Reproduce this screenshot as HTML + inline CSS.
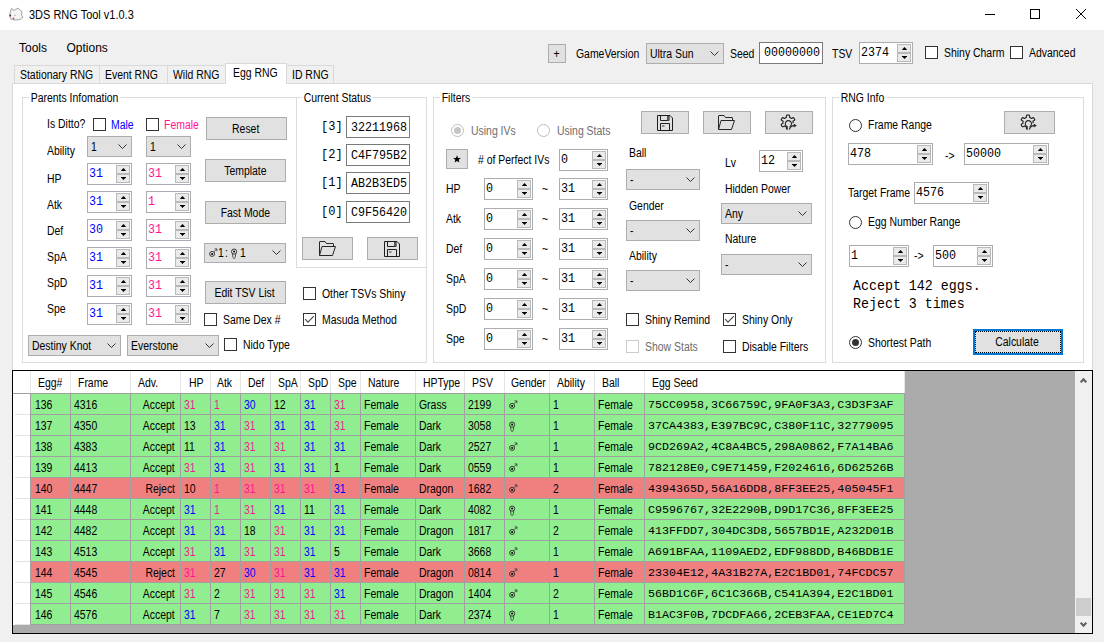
<!DOCTYPE html><html><head><meta charset="utf-8"><style>
html,body{margin:0;padding:0;width:1104px;height:642px;overflow:hidden;background:#f0f0f0;position:relative;font-family:"Liberation Sans",sans-serif}
div{box-sizing:border-box}
svg{display:block}
.t{position:absolute;white-space:nowrap;font:12px/20px "Liberation Sans",sans-serif;color:#000;transform-origin:0 50%;transform:scaleX(0.87)}
.m{position:absolute;white-space:nowrap;font:12px/20px "Liberation Mono",monospace;color:#000;transform:scaleY(1.14)}
.gt{background:#fff}
.btn,.cmb,.nud,.chk,.grp,.tb{position:absolute}
.btn{background:#e1e1e1;border:1px solid #adadad;display:flex;align-items:center;justify-content:center;padding-right:1px}
.bt{display:inline-block;white-space:nowrap;font:12px/20px "Liberation Sans",sans-serif;transform:scaleX(0.87)}
.cmb{background:#e1e1e1;border:1px solid #adadad}
.ct{position:absolute;left:3px;top:0;bottom:0;display:flex;align-items:center;white-space:nowrap;font:12px/20px "Liberation Sans",sans-serif;transform-origin:0 50%;transform:scaleX(0.87)}
.chev{position:absolute;right:4px;top:50%;margin-top:-2.6px}
.nud{background:#fff;border:1px solid #abadb3}
.nt{position:absolute;left:1px;top:0;bottom:0;display:flex;align-items:center;white-space:nowrap;font:11.7px/20px "Liberation Mono",monospace;transform:scaleY(1.14)}
.sp{position:absolute;right:1px;top:1px;bottom:1px;width:14px;border:1px solid #b9b9b9;background:#b9b9b9}
.su,.sd{position:absolute;left:0;right:0;background:#eaeaea;display:flex;align-items:center;justify-content:center}
.su{top:0;height:calc(50% - 1px)}
.sd{bottom:0;height:calc(50% - 1px)}
.chk{background:#fff;border:1px solid #333}
.chk.dis{border-color:#ccc}
.grp{border:1px solid #dcdcdc}
.tb{background:#fff;border:1px solid #7a7a7a}
.tab{position:absolute;background:#f0f0f0;border:1px solid #d9d9d9;border-bottom:none}
</style></head><body>
<div style="position:absolute;left:0;top:0;width:1104px;height:30px;background:#fff"></div>
<svg style="position:absolute;left:8px;top:7px" width="16" height="14" viewBox="0 0 16 14"><path d="M2 6 L3.5 1.5 L6 3.5 L10 1 L12 3 L14 4.5 L13.5 8 L15 10 L12 12.5 L7 13 L3 12 L1.5 9 Z" fill="#f4f4f4" stroke="#9a9a9a" stroke-width="0.9"/><circle cx="2.3" cy="8.5" r="0.9" fill="#333"/><circle cx="5.5" cy="11.5" r="0.9" fill="#d05050"/><path d="M6 8 L8 8.5" stroke="#aaa" stroke-width="0.8"/></svg>
<div class="t" style="left:29px;top:4.5px;transform:scaleX(0.915)">3DS RNG Tool v1.0.3</div>
<div style="position:absolute;left:985px;top:14px;width:10px;height:1px;background:#000"></div>
<div style="position:absolute;left:1030px;top:9px;width:10px;height:10px;border:1px solid #000"></div>
<svg style="position:absolute;left:1075px;top:8px" width="12" height="12" viewBox="0 0 12 12"><path d="M1 1 L11 11 M11 1 L1 11" stroke="#000" stroke-width="1"/></svg>
<div class="t" style="left:19px;top:37.5px;transform:none">Tools</div>
<div class="t" style="left:66.5px;top:37.5px;transform:none">Options</div>
<div class="btn" style="left:548px;top:44px;width:18px;height:19px;"><span class="bt">+</span></div>
<div class="t" style="left:575.5px;top:44px;">GameVersion</div>
<div class="cmb" style="left:646px;top:43px;width:78px;height:21px;"><span class="ct">Ultra Sun</span><svg class="chev" width="9" height="5" viewBox="0 0 9 5"><path d="M0.5 0.5 L4.5 4.5 L8.5 0.5" fill="none" stroke="#333" stroke-width="1"/></svg></div>
<div class="t" style="left:730px;top:43.5px;">Seed</div>
<div class="tb" style="left:759px;top:42px;width:64px;height:22px;"><span class="nt" style="left:4px">00000000</span></div>
<div class="t" style="left:832px;top:44px;">TSV</div>
<div class="nud" style="left:859px;top:42px;width:54px;height:22px;"><span class="nt" style="">2374</span><div class="sp"><div class="su"><svg width="5" height="3" viewBox="0 0 5 3"><path d="M-0.2 3 L2.5 0 L5.2 3Z" fill="#000"/></svg></div><div class="sd"><svg width="5" height="3" viewBox="0 0 5 3"><path d="M-0.2 0 L2.5 3 L5.2 0Z" fill="#000"/></svg></div></div></div>
<div class="chk" style="left:925px;top:46px;width:13px;height:13px;"></div>
<div class="t" style="left:944px;top:43px;">Shiny Charm</div>
<div class="chk" style="left:1010px;top:46px;width:13px;height:13px;"></div>
<div class="t" style="left:1029px;top:43px;">Advanced</div>
<div class="tab" style="left:14px;top:65px;width:86px;height:19px"></div>
<div class="t" style="left:20px;top:64.5px;">Stationary RNG</div>
<div class="tab" style="left:99px;top:65px;width:69px;height:19px"></div>
<div class="t" style="left:105px;top:64.5px;">Event RNG</div>
<div class="tab" style="left:167px;top:65px;width:59px;height:19px"></div>
<div class="t" style="left:173px;top:64.5px;">Wild RNG</div>
<div class="tab" style="left:286px;top:65px;width:48px;height:19px"></div>
<div class="t" style="left:292px;top:64.5px;">ID RNG</div>
<div style="position:absolute;left:12px;top:83px;width:1081px;height:300px;background:#fff;border:1px solid #d9d9d9"></div>
<div class="tab" style="left:225px;top:63px;width:62px;height:21px;background:#fff"></div>
<div class="t" style="left:233px;top:63px;">Egg RNG</div>
<div class="grp" style="left:22px;top:97px;width:405px;height:266px"></div>
<div class="t gt" style="left:29px;top:88px;padding:0 2px">Parents Infomation</div>
<div class="grp" style="left:296px;top:97px;width:131px;height:171px"></div>
<div class="t gt" style="left:302px;top:88px;padding:0 2px">Current Status</div>
<div class="grp" style="left:433px;top:97px;width:393px;height:266px"></div>
<div class="t gt" style="left:440px;top:88px;padding:0 2px">Filters</div>
<div class="grp" style="left:832px;top:97px;width:252px;height:266px"></div>
<div class="t gt" style="left:839px;top:88px;padding:0 2px">RNG Info</div>
<div class="t" style="left:46.5px;top:113.6px;">Is Ditto?</div>
<div class="chk" style="left:93px;top:118px;width:13px;height:13px;"></div>
<div class="t" style="left:111.2px;top:115px;color:#0000ff;">Male</div>
<div class="chk" style="left:146px;top:118px;width:13px;height:13px;"></div>
<div class="t" style="left:164.3px;top:115px;color:#ff1493;">Female</div>
<div class="btn" style="left:206px;top:117px;width:81px;height:23px;"><span class="bt">Reset</span></div>
<div class="t" style="left:46.5px;top:141px;">Ability</div>
<div class="cmb" style="left:87px;top:136px;width:45px;height:21px;"><span class="ct">1</span><svg class="chev" width="9" height="5" viewBox="0 0 9 5"><path d="M0.5 0.5 L4.5 4.5 L8.5 0.5" fill="none" stroke="#333" stroke-width="1"/></svg></div>
<div class="cmb" style="left:146px;top:136px;width:45px;height:21px;"><span class="ct">1</span><svg class="chev" width="9" height="5" viewBox="0 0 9 5"><path d="M0.5 0.5 L4.5 4.5 L8.5 0.5" fill="none" stroke="#333" stroke-width="1"/></svg></div>
<div class="btn" style="left:205px;top:159px;width:81px;height:23px;"><span class="bt">Template</span></div>
<div class="btn" style="left:205px;top:201px;width:81px;height:23px;"><span class="bt">Fast Mode</span></div>
<div class="t" style="left:46.5px;top:168.6px;">HP</div>
<div class="nud" style="left:87px;top:163px;width:45px;height:22px;"><span class="nt" style="color:#0000ff;">31</span><div class="sp"><div class="su"><svg width="5" height="3" viewBox="0 0 5 3"><path d="M-0.2 3 L2.5 0 L5.2 3Z" fill="#000"/></svg></div><div class="sd"><svg width="5" height="3" viewBox="0 0 5 3"><path d="M-0.2 0 L2.5 3 L5.2 0Z" fill="#000"/></svg></div></div></div>
<div class="nud" style="left:146px;top:163px;width:45px;height:22px;"><span class="nt" style="color:#ff1493;">31</span><div class="sp"><div class="su"><svg width="5" height="3" viewBox="0 0 5 3"><path d="M-0.2 3 L2.5 0 L5.2 3Z" fill="#000"/></svg></div><div class="sd"><svg width="5" height="3" viewBox="0 0 5 3"><path d="M-0.2 0 L2.5 3 L5.2 0Z" fill="#000"/></svg></div></div></div>
<div class="t" style="left:46.5px;top:194.6px;">Atk</div>
<div class="nud" style="left:87px;top:191px;width:45px;height:22px;"><span class="nt" style="color:#0000ff;">31</span><div class="sp"><div class="su"><svg width="5" height="3" viewBox="0 0 5 3"><path d="M-0.2 3 L2.5 0 L5.2 3Z" fill="#000"/></svg></div><div class="sd"><svg width="5" height="3" viewBox="0 0 5 3"><path d="M-0.2 0 L2.5 3 L5.2 0Z" fill="#000"/></svg></div></div></div>
<div class="nud" style="left:146px;top:191px;width:45px;height:22px;"><span class="nt" style="color:#ff1493;">1</span><div class="sp"><div class="su"><svg width="5" height="3" viewBox="0 0 5 3"><path d="M-0.2 3 L2.5 0 L5.2 3Z" fill="#000"/></svg></div><div class="sd"><svg width="5" height="3" viewBox="0 0 5 3"><path d="M-0.2 0 L2.5 3 L5.2 0Z" fill="#000"/></svg></div></div></div>
<div class="t" style="left:46.5px;top:220.6px;">Def</div>
<div class="nud" style="left:87px;top:219px;width:45px;height:22px;"><span class="nt" style="color:#0000ff;">30</span><div class="sp"><div class="su"><svg width="5" height="3" viewBox="0 0 5 3"><path d="M-0.2 3 L2.5 0 L5.2 3Z" fill="#000"/></svg></div><div class="sd"><svg width="5" height="3" viewBox="0 0 5 3"><path d="M-0.2 0 L2.5 3 L5.2 0Z" fill="#000"/></svg></div></div></div>
<div class="nud" style="left:146px;top:219px;width:45px;height:22px;"><span class="nt" style="color:#ff1493;">31</span><div class="sp"><div class="su"><svg width="5" height="3" viewBox="0 0 5 3"><path d="M-0.2 3 L2.5 0 L5.2 3Z" fill="#000"/></svg></div><div class="sd"><svg width="5" height="3" viewBox="0 0 5 3"><path d="M-0.2 0 L2.5 3 L5.2 0Z" fill="#000"/></svg></div></div></div>
<div class="t" style="left:46.5px;top:246.60000000000002px;">SpA</div>
<div class="nud" style="left:87px;top:247px;width:45px;height:22px;"><span class="nt" style="color:#0000ff;">31</span><div class="sp"><div class="su"><svg width="5" height="3" viewBox="0 0 5 3"><path d="M-0.2 3 L2.5 0 L5.2 3Z" fill="#000"/></svg></div><div class="sd"><svg width="5" height="3" viewBox="0 0 5 3"><path d="M-0.2 0 L2.5 3 L5.2 0Z" fill="#000"/></svg></div></div></div>
<div class="nud" style="left:146px;top:247px;width:45px;height:22px;"><span class="nt" style="color:#ff1493;">31</span><div class="sp"><div class="su"><svg width="5" height="3" viewBox="0 0 5 3"><path d="M-0.2 3 L2.5 0 L5.2 3Z" fill="#000"/></svg></div><div class="sd"><svg width="5" height="3" viewBox="0 0 5 3"><path d="M-0.2 0 L2.5 3 L5.2 0Z" fill="#000"/></svg></div></div></div>
<div class="t" style="left:46.5px;top:272.6px;">SpD</div>
<div class="nud" style="left:87px;top:275px;width:45px;height:22px;"><span class="nt" style="color:#0000ff;">31</span><div class="sp"><div class="su"><svg width="5" height="3" viewBox="0 0 5 3"><path d="M-0.2 3 L2.5 0 L5.2 3Z" fill="#000"/></svg></div><div class="sd"><svg width="5" height="3" viewBox="0 0 5 3"><path d="M-0.2 0 L2.5 3 L5.2 0Z" fill="#000"/></svg></div></div></div>
<div class="nud" style="left:146px;top:275px;width:45px;height:22px;"><span class="nt" style="color:#ff1493;">31</span><div class="sp"><div class="su"><svg width="5" height="3" viewBox="0 0 5 3"><path d="M-0.2 3 L2.5 0 L5.2 3Z" fill="#000"/></svg></div><div class="sd"><svg width="5" height="3" viewBox="0 0 5 3"><path d="M-0.2 0 L2.5 3 L5.2 0Z" fill="#000"/></svg></div></div></div>
<div class="t" style="left:46.5px;top:298.6px;">Spe</div>
<div class="nud" style="left:87px;top:303px;width:45px;height:22px;"><span class="nt" style="color:#0000ff;">31</span><div class="sp"><div class="su"><svg width="5" height="3" viewBox="0 0 5 3"><path d="M-0.2 3 L2.5 0 L5.2 3Z" fill="#000"/></svg></div><div class="sd"><svg width="5" height="3" viewBox="0 0 5 3"><path d="M-0.2 0 L2.5 3 L5.2 0Z" fill="#000"/></svg></div></div></div>
<div class="nud" style="left:146px;top:303px;width:45px;height:22px;"><span class="nt" style="color:#ff1493;">31</span><div class="sp"><div class="su"><svg width="5" height="3" viewBox="0 0 5 3"><path d="M-0.2 3 L2.5 0 L5.2 3Z" fill="#000"/></svg></div><div class="sd"><svg width="5" height="3" viewBox="0 0 5 3"><path d="M-0.2 0 L2.5 3 L5.2 0Z" fill="#000"/></svg></div></div></div>
<div class="cmb" style="left:204px;top:243px;width:82px;height:20px;"><span class="ct"></span><svg class="chev" width="9" height="5" viewBox="0 0 9 5"><path d="M0.5 0.5 L4.5 4.5 L8.5 0.5" fill="none" stroke="#333" stroke-width="1"/></svg></div>
<div style="position:absolute;left:208px;top:247px;width:12px;height:12px"><svg width="12" height="12" viewBox="0 0 12 12"><circle cx="4.1" cy="6.9" r="2.5" fill="none" stroke="#262626" stroke-width="0.9"/><circle cx="4.1" cy="6.9" r="1" fill="#000"/><path d="M5.9 4.9 L8.6 2.2 M6.6 1.9 H8.9 V4.2" fill="none" stroke="#3a3a3a" stroke-width="0.85"/></svg></div>
<div style="position:absolute;left:230px;top:247.6px;width:12px;height:12px"><svg width="12" height="12" viewBox="0 0 12 12"><circle cx="4.1" cy="3.6" r="2.6" fill="none" stroke="#262626" stroke-width="0.9"/><circle cx="4.1" cy="3.6" r="1" fill="#000"/><path d="M2.4 5.6 Q2.9 10.8 4.1 10.8 Q5.4 10.8 5.8 5.6" fill="none" stroke="#3a3a3a" stroke-width="0.85"/></svg></div>
<div class="t" style="left:218px;top:242.5px;">1</div>
<div class="t" style="left:224.5px;top:242.5px;">:</div>
<div class="t" style="left:239.5px;top:242.5px;">1</div>
<div class="btn" style="left:205px;top:281px;width:81px;height:23px;"><span class="bt">Edit TSV List</span></div>
<div class="chk" style="left:204px;top:313px;width:13px;height:13px;"></div>
<div class="t" style="left:223px;top:309.5px;">Same Dex #</div>
<div class="cmb" style="left:28px;top:335px;width:93px;height:21px;"><span class="ct">Destiny Knot</span><svg class="chev" width="9" height="5" viewBox="0 0 9 5"><path d="M0.5 0.5 L4.5 4.5 L8.5 0.5" fill="none" stroke="#333" stroke-width="1"/></svg></div>
<div class="cmb" style="left:127px;top:335px;width:92px;height:21px;"><span class="ct">Everstone</span><svg class="chev" width="9" height="5" viewBox="0 0 9 5"><path d="M0.5 0.5 L4.5 4.5 L8.5 0.5" fill="none" stroke="#333" stroke-width="1"/></svg></div>
<div class="chk" style="left:224px;top:338px;width:13px;height:13px;"></div>
<div class="t" style="left:243px;top:334.5px;">Nido Type</div>
<div class="m" style="left:321px;top:117px;transform:none">[3]</div>
<div class="tb" style="left:346px;top:116px;width:64px;height:22px;border-color:#7a7a7a"><span class="nt" style="left:4px;top:1px;bottom:-1px">32211968</span></div>
<div class="m" style="left:321px;top:145px;transform:none">[2]</div>
<div class="tb" style="left:346px;top:144px;width:64px;height:22px;border-color:#7a7a7a"><span class="nt" style="left:4px;top:1px;bottom:-1px">C4F795B2</span></div>
<div class="m" style="left:321px;top:173px;transform:none">[1]</div>
<div class="tb" style="left:346px;top:172px;width:64px;height:22px;border-color:#7a7a7a"><span class="nt" style="left:4px;top:1px;bottom:-1px">AB2B3ED5</span></div>
<div class="m" style="left:321px;top:202px;transform:none">[0]</div>
<div class="tb" style="left:346px;top:201px;width:64px;height:22px;border-color:#7a7a7a"><span class="nt" style="left:4px;top:1px;bottom:-1px">C9F56420</span></div>
<div class="btn" style="left:302px;top:237px;width:51px;height:23px;"><svg width="17" height="15" viewBox="0 0 17 15"><path d="M0.5 14.5 V1 Q0.5 0.5 1 0.5 H6 L7.5 2.5 H14 Q14.5 2.5 14.5 3 V5" fill="none" stroke="#262626" stroke-width="1"/><path d="M0.5 14.5 L3 5.5 H16.5 L13.5 14.5 Z" fill="none" stroke="#262626" stroke-width="1" stroke-linejoin="round"/></svg></div>
<div class="btn" style="left:367px;top:237px;width:51px;height:23px;"><svg width="16" height="16" viewBox="0 0 16 16"><path d="M0.5 0.5 H13 L15.5 3 V15.5 H0.5 Z" fill="none" stroke="#1e1e1e" stroke-width="1"/><path d="M3.5 0.5 V5.5 H12 V0.5" fill="none" stroke="#1e1e1e" stroke-width="1"/><rect x="10" y="1" width="2" height="4.5" fill="#555"/><path d="M3.5 15.5 V8.5 H12.5 V15.5" fill="none" stroke="#1e1e1e" stroke-width="1"/><rect x="5" y="10.5" width="2.5" height="1" fill="#333"/></svg></div>
<div class="chk" style="left:303px;top:287px;width:13px;height:13px;"></div>
<div class="t" style="left:321.5px;top:283.5px;">Other TSVs Shiny</div>
<div class="chk" style="left:303px;top:313px;width:13px;height:13px;"><svg width="11" height="11" viewBox="0 0 11 11" style="position:absolute;left:0;top:0"><path d="M1.2 5.2 L4 8.2 L9.8 2.2" fill="none" stroke="#4a4a4a" stroke-width="1.15"/></svg></div>
<div class="t" style="left:321.5px;top:309.5px;">Masuda Method</div>
<div style="position:absolute;left:451px;top:124px;width:13px;height:13px"><svg width="13" height="13" viewBox="0 0 13 13"><circle cx="6.5" cy="6.5" r="6" fill="#fff" stroke="#bcbcbc" stroke-width="1"/><circle cx="6.5" cy="6.5" r="3.5" fill="#c4c4c4"/></svg></div>
<div class="t" style="left:470.5px;top:120.5px;color:#6d6d6d;">Using IVs</div>
<div style="position:absolute;left:537px;top:124px;width:13px;height:13px"><svg width="13" height="13" viewBox="0 0 13 13"><circle cx="6.5" cy="6.5" r="6" fill="#fff" stroke="#bcbcbc" stroke-width="1"/></svg></div>
<div class="t" style="left:556.5px;top:120.5px;color:#6d6d6d;">Using Stats</div>
<div class="btn" style="left:446px;top:149px;width:22px;height:20px;"><div style="margin-top:-1px"><svg width="8" height="8" viewBox="0 0 8 8"><path d="M4.00 0.20 L5.03 2.88 L7.90 3.03 L5.66 4.84 L6.41 7.62 L4.00 6.05 L1.59 7.62 L2.34 4.84 L0.10 3.03 L2.97 2.88Z" fill="#000"/></svg></div></div>
<div class="t" style="left:477.5px;top:149.5px;"># of Perfect IVs</div>
<div class="nud" style="left:559px;top:149px;width:49px;height:22px;"><span class="nt" style="">0</span><div class="sp"><div class="su"><svg width="5" height="3" viewBox="0 0 5 3"><path d="M-0.2 3 L2.5 0 L5.2 3Z" fill="#000"/></svg></div><div class="sd"><svg width="5" height="3" viewBox="0 0 5 3"><path d="M-0.2 0 L2.5 3 L5.2 0Z" fill="#000"/></svg></div></div></div>
<div class="t" style="left:446px;top:179px;">HP</div>
<div class="nud" style="left:484px;top:178px;width:49px;height:22px;"><span class="nt" style="">0</span><div class="sp"><div class="su"><svg width="5" height="3" viewBox="0 0 5 3"><path d="M-0.2 3 L2.5 0 L5.2 3Z" fill="#000"/></svg></div><div class="sd"><svg width="5" height="3" viewBox="0 0 5 3"><path d="M-0.2 0 L2.5 3 L5.2 0Z" fill="#000"/></svg></div></div></div>
<div class="t" style="left:541.5px;top:178.5px;">~</div>
<div class="nud" style="left:559px;top:178px;width:49px;height:22px;"><span class="nt" style="">31</span><div class="sp"><div class="su"><svg width="5" height="3" viewBox="0 0 5 3"><path d="M-0.2 3 L2.5 0 L5.2 3Z" fill="#000"/></svg></div><div class="sd"><svg width="5" height="3" viewBox="0 0 5 3"><path d="M-0.2 0 L2.5 3 L5.2 0Z" fill="#000"/></svg></div></div></div>
<div class="t" style="left:446px;top:209px;">Atk</div>
<div class="nud" style="left:484px;top:208px;width:49px;height:22px;"><span class="nt" style="">0</span><div class="sp"><div class="su"><svg width="5" height="3" viewBox="0 0 5 3"><path d="M-0.2 3 L2.5 0 L5.2 3Z" fill="#000"/></svg></div><div class="sd"><svg width="5" height="3" viewBox="0 0 5 3"><path d="M-0.2 0 L2.5 3 L5.2 0Z" fill="#000"/></svg></div></div></div>
<div class="t" style="left:541.5px;top:208.5px;">~</div>
<div class="nud" style="left:559px;top:208px;width:49px;height:22px;"><span class="nt" style="">31</span><div class="sp"><div class="su"><svg width="5" height="3" viewBox="0 0 5 3"><path d="M-0.2 3 L2.5 0 L5.2 3Z" fill="#000"/></svg></div><div class="sd"><svg width="5" height="3" viewBox="0 0 5 3"><path d="M-0.2 0 L2.5 3 L5.2 0Z" fill="#000"/></svg></div></div></div>
<div class="t" style="left:446px;top:239px;">Def</div>
<div class="nud" style="left:484px;top:238px;width:49px;height:22px;"><span class="nt" style="">0</span><div class="sp"><div class="su"><svg width="5" height="3" viewBox="0 0 5 3"><path d="M-0.2 3 L2.5 0 L5.2 3Z" fill="#000"/></svg></div><div class="sd"><svg width="5" height="3" viewBox="0 0 5 3"><path d="M-0.2 0 L2.5 3 L5.2 0Z" fill="#000"/></svg></div></div></div>
<div class="t" style="left:541.5px;top:238.5px;">~</div>
<div class="nud" style="left:559px;top:238px;width:49px;height:22px;"><span class="nt" style="">31</span><div class="sp"><div class="su"><svg width="5" height="3" viewBox="0 0 5 3"><path d="M-0.2 3 L2.5 0 L5.2 3Z" fill="#000"/></svg></div><div class="sd"><svg width="5" height="3" viewBox="0 0 5 3"><path d="M-0.2 0 L2.5 3 L5.2 0Z" fill="#000"/></svg></div></div></div>
<div class="t" style="left:446px;top:269px;">SpA</div>
<div class="nud" style="left:484px;top:268px;width:49px;height:22px;"><span class="nt" style="">0</span><div class="sp"><div class="su"><svg width="5" height="3" viewBox="0 0 5 3"><path d="M-0.2 3 L2.5 0 L5.2 3Z" fill="#000"/></svg></div><div class="sd"><svg width="5" height="3" viewBox="0 0 5 3"><path d="M-0.2 0 L2.5 3 L5.2 0Z" fill="#000"/></svg></div></div></div>
<div class="t" style="left:541.5px;top:268.5px;">~</div>
<div class="nud" style="left:559px;top:268px;width:49px;height:22px;"><span class="nt" style="">31</span><div class="sp"><div class="su"><svg width="5" height="3" viewBox="0 0 5 3"><path d="M-0.2 3 L2.5 0 L5.2 3Z" fill="#000"/></svg></div><div class="sd"><svg width="5" height="3" viewBox="0 0 5 3"><path d="M-0.2 0 L2.5 3 L5.2 0Z" fill="#000"/></svg></div></div></div>
<div class="t" style="left:446px;top:299px;">SpD</div>
<div class="nud" style="left:484px;top:298px;width:49px;height:22px;"><span class="nt" style="">0</span><div class="sp"><div class="su"><svg width="5" height="3" viewBox="0 0 5 3"><path d="M-0.2 3 L2.5 0 L5.2 3Z" fill="#000"/></svg></div><div class="sd"><svg width="5" height="3" viewBox="0 0 5 3"><path d="M-0.2 0 L2.5 3 L5.2 0Z" fill="#000"/></svg></div></div></div>
<div class="t" style="left:541.5px;top:298.5px;">~</div>
<div class="nud" style="left:559px;top:298px;width:49px;height:22px;"><span class="nt" style="">31</span><div class="sp"><div class="su"><svg width="5" height="3" viewBox="0 0 5 3"><path d="M-0.2 3 L2.5 0 L5.2 3Z" fill="#000"/></svg></div><div class="sd"><svg width="5" height="3" viewBox="0 0 5 3"><path d="M-0.2 0 L2.5 3 L5.2 0Z" fill="#000"/></svg></div></div></div>
<div class="t" style="left:446px;top:329px;">Spe</div>
<div class="nud" style="left:484px;top:328px;width:49px;height:22px;"><span class="nt" style="">0</span><div class="sp"><div class="su"><svg width="5" height="3" viewBox="0 0 5 3"><path d="M-0.2 3 L2.5 0 L5.2 3Z" fill="#000"/></svg></div><div class="sd"><svg width="5" height="3" viewBox="0 0 5 3"><path d="M-0.2 0 L2.5 3 L5.2 0Z" fill="#000"/></svg></div></div></div>
<div class="t" style="left:541.5px;top:328.5px;">~</div>
<div class="nud" style="left:559px;top:328px;width:49px;height:22px;"><span class="nt" style="">31</span><div class="sp"><div class="su"><svg width="5" height="3" viewBox="0 0 5 3"><path d="M-0.2 3 L2.5 0 L5.2 3Z" fill="#000"/></svg></div><div class="sd"><svg width="5" height="3" viewBox="0 0 5 3"><path d="M-0.2 0 L2.5 3 L5.2 0Z" fill="#000"/></svg></div></div></div>
<div class="btn" style="left:641px;top:111px;width:48px;height:23px;"><svg width="16" height="16" viewBox="0 0 16 16"><path d="M0.5 0.5 H13 L15.5 3 V15.5 H0.5 Z" fill="none" stroke="#1e1e1e" stroke-width="1"/><path d="M3.5 0.5 V5.5 H12 V0.5" fill="none" stroke="#1e1e1e" stroke-width="1"/><rect x="10" y="1" width="2" height="4.5" fill="#555"/><path d="M3.5 15.5 V8.5 H12.5 V15.5" fill="none" stroke="#1e1e1e" stroke-width="1"/><rect x="5" y="10.5" width="2.5" height="1" fill="#333"/></svg></div>
<div class="btn" style="left:703px;top:111px;width:48px;height:23px;"><svg width="17" height="15" viewBox="0 0 17 15"><path d="M0.5 14.5 V1 Q0.5 0.5 1 0.5 H6 L7.5 2.5 H14 Q14.5 2.5 14.5 3 V5" fill="none" stroke="#262626" stroke-width="1"/><path d="M0.5 14.5 L3 5.5 H16.5 L13.5 14.5 Z" fill="none" stroke="#262626" stroke-width="1" stroke-linejoin="round"/></svg></div>
<div class="btn" style="left:765px;top:111px;width:48px;height:23px;"><svg width="18" height="17" viewBox="0 0 18 17"><path d="M6.7 15.3 L6.5 14.8 L6.4 14.1 L6.4 13.4 L6.3 12.9 L6.1 12.8 L5.9 12.7 L5.7 12.6 L5.5 12.5 L5.3 12.4 L5.1 12.3 L5.0 12.2 L4.8 12.0 L4.3 12.2 L3.7 12.5 L3.0 12.8 L2.5 12.8 L2.3 12.6 L2.1 12.3 L1.9 12.1 L1.8 11.8 L1.6 11.5 L1.5 11.2 L1.3 11.0 L1.2 10.7 L1.5 10.2 L2.1 9.8 L2.7 9.4 L3.1 9.1 L3.0 8.9 L3.0 8.6 L3.0 8.4 L3.0 8.2 L3.0 8.0 L3.0 7.8 L3.0 7.5 L3.1 7.3 L2.7 7.0 L2.1 6.6 L1.5 6.2 L1.2 5.7 L1.3 5.4 L1.5 5.2 L1.6 4.9 L1.8 4.6 L1.9 4.3 L2.1 4.1 L2.3 3.8 L2.5 3.6 L3.0 3.6 L3.7 3.9 L4.3 4.2 L4.8 4.4 L5.0 4.2 L5.1 4.1 L5.3 4.0 L5.5 3.9 L5.7 3.8 L5.9 3.7 L6.1 3.6 L6.3 3.5 L6.4 3.0 L6.4 2.3 L6.5 1.6 L6.7 1.1 L7.1 1.1 L7.4 1.0 L7.7 1.0 L8.0 1.0 L8.3 1.0 L8.6 1.0 L8.9 1.1 L9.3 1.1 L9.5 1.6 L9.6 2.3 L9.6 3.0 L9.7 3.5 L9.9 3.6 L10.1 3.7 L10.3 3.8 L10.5 3.9 L10.7 4.0 L10.9 4.1 L11.0 4.2 L11.2 4.4 L11.7 4.2 L12.3 3.9 L13.0 3.6 L13.5 3.6 L13.7 3.8 L13.9 4.1 L14.1 4.3 L14.2 4.6 L14.4 4.9 L14.5 5.2 L14.7 5.4 L14.8 5.7 L14.5 6.2 L13.9 6.6 L13.3 7.0 L12.9 7.3 L13.0 7.5 L13.0 7.8 L13.0 8.0 L13.0 8.2 L13.0 8.4 L13.0 8.6 L13.0 8.9 L12.9 9.1 L12.9 9.3" fill="none" stroke="#1a1a1a" stroke-width="1.1" stroke-linejoin="round"/><path d="M7.2 15.8 V12.6 A3.1 3.1 0 1 1 9.6 12.6" fill="none" stroke="#2a2a2a" stroke-width="1.1"/><path d="M9.4 15.6 Q10 11.6 14.4 11.6" fill="none" stroke="#2a2a2a" stroke-width="1.1"/><path d="M13.8 9.8 L16.8 11.6 L13.8 13.4 Z" fill="#222"/></svg></div>
<div class="t" style="left:628.5px;top:143px;">Ball</div>
<div class="cmb" style="left:626px;top:169px;width:74px;height:21px;"><span class="ct">-</span><svg class="chev" width="9" height="5" viewBox="0 0 9 5"><path d="M0.5 0.5 L4.5 4.5 L8.5 0.5" fill="none" stroke="#333" stroke-width="1"/></svg></div>
<div class="t" style="left:628.5px;top:195.5px;">Gender</div>
<div class="cmb" style="left:626px;top:220px;width:74px;height:21px;"><span class="ct">-</span><svg class="chev" width="9" height="5" viewBox="0 0 9 5"><path d="M0.5 0.5 L4.5 4.5 L8.5 0.5" fill="none" stroke="#333" stroke-width="1"/></svg></div>
<div class="t" style="left:628.5px;top:246px;">Ability</div>
<div class="cmb" style="left:626px;top:270px;width:74px;height:21px;"><span class="ct">-</span><svg class="chev" width="9" height="5" viewBox="0 0 9 5"><path d="M0.5 0.5 L4.5 4.5 L8.5 0.5" fill="none" stroke="#333" stroke-width="1"/></svg></div>
<div class="t" style="left:725px;top:153px;">Lv</div>
<div class="nud" style="left:759px;top:150px;width:44px;height:22px;"><span class="nt" style="">12</span><div class="sp"><div class="su"><svg width="5" height="3" viewBox="0 0 5 3"><path d="M-0.2 3 L2.5 0 L5.2 3Z" fill="#000"/></svg></div><div class="sd"><svg width="5" height="3" viewBox="0 0 5 3"><path d="M-0.2 0 L2.5 3 L5.2 0Z" fill="#000"/></svg></div></div></div>
<div class="t" style="left:724.5px;top:178.5px;">Hidden Power</div>
<div class="cmb" style="left:721px;top:203px;width:91px;height:21px;"><span class="ct">Any</span><svg class="chev" width="9" height="5" viewBox="0 0 9 5"><path d="M0.5 0.5 L4.5 4.5 L8.5 0.5" fill="none" stroke="#333" stroke-width="1"/></svg></div>
<div class="t" style="left:724.5px;top:228.5px;">Nature</div>
<div class="cmb" style="left:721px;top:254px;width:91px;height:21px;"><span class="ct">-</span><svg class="chev" width="9" height="5" viewBox="0 0 9 5"><path d="M0.5 0.5 L4.5 4.5 L8.5 0.5" fill="none" stroke="#333" stroke-width="1"/></svg></div>
<div class="chk" style="left:626px;top:313px;width:13px;height:13px;"></div>
<div class="t" style="left:644.5px;top:309.5px;">Shiny Remind</div>
<div class="chk" style="left:723px;top:313px;width:13px;height:13px;"><svg width="11" height="11" viewBox="0 0 11 11" style="position:absolute;left:0;top:0"><path d="M1.2 5.2 L4 8.2 L9.8 2.2" fill="none" stroke="#4a4a4a" stroke-width="1.15"/></svg></div>
<div class="t" style="left:741.5px;top:309.5px;">Shiny Only</div>
<div class="chk dis" style="left:626px;top:340px;width:13px;height:13px;"></div>
<div class="t" style="left:644.5px;top:336.5px;color:#6d6d6d;">Show Stats</div>
<div class="chk" style="left:723px;top:340px;width:13px;height:13px;"></div>
<div class="t" style="left:741.5px;top:336.5px;">Disable Filters</div>
<div style="position:absolute;left:849px;top:119px;width:13px;height:13px"><svg width="13" height="13" viewBox="0 0 13 13"><circle cx="6.5" cy="6.5" r="6" fill="#fff" stroke="#333" stroke-width="1"/></svg></div>
<div class="t" style="left:868px;top:115px;">Frame Range</div>
<div class="btn" style="left:1004px;top:111px;width:51px;height:23px;"><svg width="18" height="17" viewBox="0 0 18 17"><path d="M6.7 15.3 L6.5 14.8 L6.4 14.1 L6.4 13.4 L6.3 12.9 L6.1 12.8 L5.9 12.7 L5.7 12.6 L5.5 12.5 L5.3 12.4 L5.1 12.3 L5.0 12.2 L4.8 12.0 L4.3 12.2 L3.7 12.5 L3.0 12.8 L2.5 12.8 L2.3 12.6 L2.1 12.3 L1.9 12.1 L1.8 11.8 L1.6 11.5 L1.5 11.2 L1.3 11.0 L1.2 10.7 L1.5 10.2 L2.1 9.8 L2.7 9.4 L3.1 9.1 L3.0 8.9 L3.0 8.6 L3.0 8.4 L3.0 8.2 L3.0 8.0 L3.0 7.8 L3.0 7.5 L3.1 7.3 L2.7 7.0 L2.1 6.6 L1.5 6.2 L1.2 5.7 L1.3 5.4 L1.5 5.2 L1.6 4.9 L1.8 4.6 L1.9 4.3 L2.1 4.1 L2.3 3.8 L2.5 3.6 L3.0 3.6 L3.7 3.9 L4.3 4.2 L4.8 4.4 L5.0 4.2 L5.1 4.1 L5.3 4.0 L5.5 3.9 L5.7 3.8 L5.9 3.7 L6.1 3.6 L6.3 3.5 L6.4 3.0 L6.4 2.3 L6.5 1.6 L6.7 1.1 L7.1 1.1 L7.4 1.0 L7.7 1.0 L8.0 1.0 L8.3 1.0 L8.6 1.0 L8.9 1.1 L9.3 1.1 L9.5 1.6 L9.6 2.3 L9.6 3.0 L9.7 3.5 L9.9 3.6 L10.1 3.7 L10.3 3.8 L10.5 3.9 L10.7 4.0 L10.9 4.1 L11.0 4.2 L11.2 4.4 L11.7 4.2 L12.3 3.9 L13.0 3.6 L13.5 3.6 L13.7 3.8 L13.9 4.1 L14.1 4.3 L14.2 4.6 L14.4 4.9 L14.5 5.2 L14.7 5.4 L14.8 5.7 L14.5 6.2 L13.9 6.6 L13.3 7.0 L12.9 7.3 L13.0 7.5 L13.0 7.8 L13.0 8.0 L13.0 8.2 L13.0 8.4 L13.0 8.6 L13.0 8.9 L12.9 9.1 L12.9 9.3" fill="none" stroke="#1a1a1a" stroke-width="1.1" stroke-linejoin="round"/><path d="M7.2 15.8 V12.6 A3.1 3.1 0 1 1 9.6 12.6" fill="none" stroke="#2a2a2a" stroke-width="1.1"/><path d="M9.4 15.6 Q10 11.6 14.4 11.6" fill="none" stroke="#2a2a2a" stroke-width="1.1"/><path d="M13.8 9.8 L16.8 11.6 L13.8 13.4 Z" fill="#222"/></svg></div>
<div class="nud" style="left:848px;top:143px;width:85px;height:22px;"><span class="nt" style="">478</span><div class="sp"><div class="su"><svg width="5" height="3" viewBox="0 0 5 3"><path d="M-0.2 3 L2.5 0 L5.2 3Z" fill="#000"/></svg></div><div class="sd"><svg width="5" height="3" viewBox="0 0 5 3"><path d="M-0.2 0 L2.5 3 L5.2 0Z" fill="#000"/></svg></div></div></div>
<div class="t" style="left:944.5px;top:145.5px;">-></div>
<div class="nud" style="left:964px;top:143px;width:85px;height:22px;"><span class="nt" style="">50000</span><div class="sp"><div class="su"><svg width="5" height="3" viewBox="0 0 5 3"><path d="M-0.2 3 L2.5 0 L5.2 3Z" fill="#000"/></svg></div><div class="sd"><svg width="5" height="3" viewBox="0 0 5 3"><path d="M-0.2 0 L2.5 3 L5.2 0Z" fill="#000"/></svg></div></div></div>
<div class="t" style="left:847.5px;top:182.5px;">Target Frame</div>
<div class="nud" style="left:914px;top:182px;width:75px;height:22px;"><span class="nt" style="">4576</span><div class="sp"><div class="su"><svg width="5" height="3" viewBox="0 0 5 3"><path d="M-0.2 3 L2.5 0 L5.2 3Z" fill="#000"/></svg></div><div class="sd"><svg width="5" height="3" viewBox="0 0 5 3"><path d="M-0.2 0 L2.5 3 L5.2 0Z" fill="#000"/></svg></div></div></div>
<div style="position:absolute;left:849px;top:216px;width:13px;height:13px"><svg width="13" height="13" viewBox="0 0 13 13"><circle cx="6.5" cy="6.5" r="6" fill="#fff" stroke="#333" stroke-width="1"/></svg></div>
<div class="t" style="left:868px;top:212px;">Egg Number Range</div>
<div class="nud" style="left:849px;top:245px;width:60px;height:22px;"><span class="nt" style="">1</span><div class="sp"><div class="su"><svg width="5" height="3" viewBox="0 0 5 3"><path d="M-0.2 3 L2.5 0 L5.2 3Z" fill="#000"/></svg></div><div class="sd"><svg width="5" height="3" viewBox="0 0 5 3"><path d="M-0.2 0 L2.5 3 L5.2 0Z" fill="#000"/></svg></div></div></div>
<div class="t" style="left:914px;top:245.5px;">-></div>
<div class="nud" style="left:933px;top:245px;width:60px;height:22px;"><span class="nt" style="">500</span><div class="sp"><div class="su"><svg width="5" height="3" viewBox="0 0 5 3"><path d="M-0.2 3 L2.5 0 L5.2 3Z" fill="#000"/></svg></div><div class="sd"><svg width="5" height="3" viewBox="0 0 5 3"><path d="M-0.2 0 L2.5 3 L5.2 0Z" fill="#000"/></svg></div></div></div>
<div class="m" style="left:853px;top:276.8px;font-size:13.3px;">Accept 142 eggs.</div>
<div class="m" style="left:853px;top:294.8px;font-size:13.3px;">Reject 3 times</div>
<div style="position:absolute;left:849px;top:336px;width:13px;height:13px"><svg width="13" height="13" viewBox="0 0 13 13"><circle cx="6.5" cy="6.5" r="6" fill="#fff" stroke="#333" stroke-width="1"/><circle cx="6.5" cy="6.5" r="3.5" fill="#333"/></svg></div>
<div class="t" style="left:868px;top:332.5px;">Shortest Path</div>
<div style="position:absolute;left:973px;top:329px;width:90px;height:26px;border:2px solid #0078d7;background:#e1e1e1"><div style="position:absolute;left:0;top:0;right:0;bottom:0;border:1px dotted #000"></div><div class="bt" style="position:absolute;left:0;right:2px;top:1px;text-align:center">Calculate</div></div>
<div style="position:absolute;left:12px;top:370px;width:1081px;height:264px;background:#ababab;border:1px solid #000"></div>
<div style="position:absolute;left:13px;top:371px;width:892px;height:22px;background:#fff"></div>
<div style="position:absolute;left:13px;top:371px;width:17px;height:254px;background:#fff"></div>
<div style="position:absolute;left:70px;top:371px;width:1px;height:22px;background:#e5e5e5"></div>
<div style="position:absolute;left:130px;top:371px;width:1px;height:22px;background:#e5e5e5"></div>
<div style="position:absolute;left:180px;top:371px;width:1px;height:22px;background:#e5e5e5"></div>
<div style="position:absolute;left:210px;top:371px;width:1px;height:22px;background:#e5e5e5"></div>
<div style="position:absolute;left:240px;top:371px;width:1px;height:22px;background:#e5e5e5"></div>
<div style="position:absolute;left:270px;top:371px;width:1px;height:22px;background:#e5e5e5"></div>
<div style="position:absolute;left:300px;top:371px;width:1px;height:22px;background:#e5e5e5"></div>
<div style="position:absolute;left:330px;top:371px;width:1px;height:22px;background:#e5e5e5"></div>
<div style="position:absolute;left:360px;top:371px;width:1px;height:22px;background:#e5e5e5"></div>
<div style="position:absolute;left:415px;top:371px;width:1px;height:22px;background:#e5e5e5"></div>
<div style="position:absolute;left:464px;top:371px;width:1px;height:22px;background:#e5e5e5"></div>
<div style="position:absolute;left:504px;top:371px;width:1px;height:22px;background:#e5e5e5"></div>
<div style="position:absolute;left:549px;top:371px;width:1px;height:22px;background:#e5e5e5"></div>
<div style="position:absolute;left:594px;top:371px;width:1px;height:22px;background:#e5e5e5"></div>
<div style="position:absolute;left:644px;top:371px;width:1px;height:22px;background:#e5e5e5"></div>
<div style="position:absolute;left:904px;top:371px;width:1px;height:22px;background:#e5e5e5"></div>
<div style="position:absolute;left:30px;top:371px;width:1px;height:22px;background:#e5e5e5"></div>
<div style="position:absolute;left:31px;top:394px;width:873px;height:20px;background:#90ee90"></div>
<div style="position:absolute;left:31px;top:393px;width:873px;height:1px;background:#a0a0a0"></div>
<div style="position:absolute;left:15px;top:414px;width:15px;height:1px;background:#e3e3e3"></div>
<div class="t" style="left:34.5px;top:395px;">136</div>
<div class="t" style="left:74px;top:395px;">4316</div>
<div class="t" style="right:929px;top:395px;transform-origin:100% 50%">Accept</div>
<div class="t" style="left:184px;top:395px;color:#ff1493;">31</div>
<div class="t" style="left:214px;top:395px;color:#ff1493;">1</div>
<div class="t" style="left:244px;top:395px;color:#0000ff;">30</div>
<div class="t" style="left:274px;top:395px;color:#000;">12</div>
<div class="t" style="left:304px;top:395px;color:#0000ff;">31</div>
<div class="t" style="left:334px;top:395px;color:#ff1493;">31</div>
<div class="t" style="left:364px;top:395px;">Female</div>
<div class="t" style="left:419px;top:395px;">Grass</div>
<div class="t" style="left:468px;top:395px;">2199</div>
<div style="position:absolute;left:508px;top:399px;width:12px;height:12px"><svg width="12" height="12" viewBox="0 0 12 12"><circle cx="4.1" cy="6.9" r="2.5" fill="none" stroke="#262626" stroke-width="0.9"/><circle cx="4.1" cy="6.9" r="1" fill="#000"/><path d="M5.9 4.9 L8.6 2.2 M6.6 1.9 H8.9 V4.2" fill="none" stroke="#3a3a3a" stroke-width="0.85"/></svg></div>
<div class="t" style="left:553px;top:395px;">1</div>
<div class="t" style="left:598px;top:395px;">Female</div>
<div class="m" style="left:648px;top:395px;font-size:11.7px;transform:none">75CC0958,3C66759C,9FA0F3A3,C3D3F3AF</div>
<div style="position:absolute;left:31px;top:415px;width:873px;height:20px;background:#90ee90"></div>
<div style="position:absolute;left:31px;top:414px;width:873px;height:1px;background:#a0a0a0"></div>
<div style="position:absolute;left:15px;top:435px;width:15px;height:1px;background:#e3e3e3"></div>
<div class="t" style="left:34.5px;top:416px;">137</div>
<div class="t" style="left:74px;top:416px;">4350</div>
<div class="t" style="right:929px;top:416px;transform-origin:100% 50%">Accept</div>
<div class="t" style="left:184px;top:416px;color:#000;">13</div>
<div class="t" style="left:214px;top:416px;color:#0000ff;">31</div>
<div class="t" style="left:244px;top:416px;color:#ff1493;">31</div>
<div class="t" style="left:274px;top:416px;color:#0000ff;">31</div>
<div class="t" style="left:304px;top:416px;color:#0000ff;">31</div>
<div class="t" style="left:334px;top:416px;color:#ff1493;">31</div>
<div class="t" style="left:364px;top:416px;">Female</div>
<div class="t" style="left:419px;top:416px;">Dark</div>
<div class="t" style="left:468px;top:416px;">3058</div>
<div style="position:absolute;left:508px;top:420.5px;width:12px;height:12px"><svg width="12" height="12" viewBox="0 0 12 12"><circle cx="4.1" cy="3.6" r="2.6" fill="none" stroke="#262626" stroke-width="0.9"/><circle cx="4.1" cy="3.6" r="1" fill="#000"/><path d="M2.4 5.6 Q2.9 10.8 4.1 10.8 Q5.4 10.8 5.8 5.6" fill="none" stroke="#3a3a3a" stroke-width="0.85"/></svg></div>
<div class="t" style="left:553px;top:416px;">1</div>
<div class="t" style="left:598px;top:416px;">Female</div>
<div class="m" style="left:648px;top:416px;font-size:11.7px;transform:none">37CA4383,E397BC9C,C380F11C,32779095</div>
<div style="position:absolute;left:31px;top:436px;width:873px;height:20px;background:#90ee90"></div>
<div style="position:absolute;left:31px;top:435px;width:873px;height:1px;background:#a0a0a0"></div>
<div style="position:absolute;left:15px;top:456px;width:15px;height:1px;background:#e3e3e3"></div>
<div class="t" style="left:34.5px;top:437px;">138</div>
<div class="t" style="left:74px;top:437px;">4383</div>
<div class="t" style="right:929px;top:437px;transform-origin:100% 50%">Accept</div>
<div class="t" style="left:184px;top:437px;color:#000;">11</div>
<div class="t" style="left:214px;top:437px;color:#0000ff;">31</div>
<div class="t" style="left:244px;top:437px;color:#ff1493;">31</div>
<div class="t" style="left:274px;top:437px;color:#ff1493;">31</div>
<div class="t" style="left:304px;top:437px;color:#0000ff;">31</div>
<div class="t" style="left:334px;top:437px;color:#0000ff;">31</div>
<div class="t" style="left:364px;top:437px;">Female</div>
<div class="t" style="left:419px;top:437px;">Dark</div>
<div class="t" style="left:468px;top:437px;">2527</div>
<div style="position:absolute;left:508px;top:441px;width:12px;height:12px"><svg width="12" height="12" viewBox="0 0 12 12"><circle cx="4.1" cy="6.9" r="2.5" fill="none" stroke="#262626" stroke-width="0.9"/><circle cx="4.1" cy="6.9" r="1" fill="#000"/><path d="M5.9 4.9 L8.6 2.2 M6.6 1.9 H8.9 V4.2" fill="none" stroke="#3a3a3a" stroke-width="0.85"/></svg></div>
<div class="t" style="left:553px;top:437px;">1</div>
<div class="t" style="left:598px;top:437px;">Female</div>
<div class="m" style="left:648px;top:437px;font-size:11.7px;transform:none">9CD269A2,4C8A4BC5,298A0862,F7A14BA6</div>
<div style="position:absolute;left:31px;top:457px;width:873px;height:20px;background:#90ee90"></div>
<div style="position:absolute;left:31px;top:456px;width:873px;height:1px;background:#a0a0a0"></div>
<div style="position:absolute;left:15px;top:477px;width:15px;height:1px;background:#e3e3e3"></div>
<div class="t" style="left:34.5px;top:458px;">139</div>
<div class="t" style="left:74px;top:458px;">4413</div>
<div class="t" style="right:929px;top:458px;transform-origin:100% 50%">Accept</div>
<div class="t" style="left:184px;top:458px;color:#ff1493;">31</div>
<div class="t" style="left:214px;top:458px;color:#0000ff;">31</div>
<div class="t" style="left:244px;top:458px;color:#ff1493;">31</div>
<div class="t" style="left:274px;top:458px;color:#0000ff;">31</div>
<div class="t" style="left:304px;top:458px;color:#0000ff;">31</div>
<div class="t" style="left:334px;top:458px;color:#000;">1</div>
<div class="t" style="left:364px;top:458px;">Female</div>
<div class="t" style="left:419px;top:458px;">Dark</div>
<div class="t" style="left:468px;top:458px;">0559</div>
<div style="position:absolute;left:508px;top:462px;width:12px;height:12px"><svg width="12" height="12" viewBox="0 0 12 12"><circle cx="4.1" cy="6.9" r="2.5" fill="none" stroke="#262626" stroke-width="0.9"/><circle cx="4.1" cy="6.9" r="1" fill="#000"/><path d="M5.9 4.9 L8.6 2.2 M6.6 1.9 H8.9 V4.2" fill="none" stroke="#3a3a3a" stroke-width="0.85"/></svg></div>
<div class="t" style="left:553px;top:458px;">1</div>
<div class="t" style="left:598px;top:458px;">Female</div>
<div class="m" style="left:648px;top:458px;font-size:11.7px;transform:none">782128E0,C9E71459,F2024616,6D62526B</div>
<div style="position:absolute;left:31px;top:478px;width:873px;height:20px;background:#f08080"></div>
<div style="position:absolute;left:31px;top:477px;width:873px;height:1px;background:#a0a0a0"></div>
<div style="position:absolute;left:15px;top:498px;width:15px;height:1px;background:#e3e3e3"></div>
<div class="t" style="left:34.5px;top:479px;">140</div>
<div class="t" style="left:74px;top:479px;">4447</div>
<div class="t" style="right:929px;top:479px;transform-origin:100% 50%">Reject</div>
<div class="t" style="left:184px;top:479px;color:#000;">10</div>
<div class="t" style="left:214px;top:479px;color:#ff1493;">1</div>
<div class="t" style="left:244px;top:479px;color:#ff1493;">31</div>
<div class="t" style="left:274px;top:479px;color:#ff1493;">31</div>
<div class="t" style="left:304px;top:479px;color:#ff1493;">31</div>
<div class="t" style="left:334px;top:479px;color:#0000ff;">31</div>
<div class="t" style="left:364px;top:479px;">Female</div>
<div class="t" style="left:419px;top:479px;">Dragon</div>
<div class="t" style="left:468px;top:479px;">1682</div>
<div style="position:absolute;left:508px;top:483px;width:12px;height:12px"><svg width="12" height="12" viewBox="0 0 12 12"><circle cx="4.1" cy="6.9" r="2.5" fill="none" stroke="#262626" stroke-width="0.9"/><circle cx="4.1" cy="6.9" r="1" fill="#000"/><path d="M5.9 4.9 L8.6 2.2 M6.6 1.9 H8.9 V4.2" fill="none" stroke="#3a3a3a" stroke-width="0.85"/></svg></div>
<div class="t" style="left:553px;top:479px;">2</div>
<div class="t" style="left:598px;top:479px;">Female</div>
<div class="m" style="left:648px;top:479px;font-size:11.7px;transform:none">4394365D,56A16DD8,8FF3EE25,405045F1</div>
<div style="position:absolute;left:31px;top:499px;width:873px;height:20px;background:#90ee90"></div>
<div style="position:absolute;left:31px;top:498px;width:873px;height:1px;background:#a0a0a0"></div>
<div style="position:absolute;left:15px;top:519px;width:15px;height:1px;background:#e3e3e3"></div>
<div class="t" style="left:34.5px;top:500px;">141</div>
<div class="t" style="left:74px;top:500px;">4448</div>
<div class="t" style="right:929px;top:500px;transform-origin:100% 50%">Accept</div>
<div class="t" style="left:184px;top:500px;color:#0000ff;">31</div>
<div class="t" style="left:214px;top:500px;color:#ff1493;">1</div>
<div class="t" style="left:244px;top:500px;color:#ff1493;">31</div>
<div class="t" style="left:274px;top:500px;color:#0000ff;">31</div>
<div class="t" style="left:304px;top:500px;color:#000;">11</div>
<div class="t" style="left:334px;top:500px;color:#0000ff;">31</div>
<div class="t" style="left:364px;top:500px;">Female</div>
<div class="t" style="left:419px;top:500px;">Dark</div>
<div class="t" style="left:468px;top:500px;">4082</div>
<div style="position:absolute;left:508px;top:504.5px;width:12px;height:12px"><svg width="12" height="12" viewBox="0 0 12 12"><circle cx="4.1" cy="3.6" r="2.6" fill="none" stroke="#262626" stroke-width="0.9"/><circle cx="4.1" cy="3.6" r="1" fill="#000"/><path d="M2.4 5.6 Q2.9 10.8 4.1 10.8 Q5.4 10.8 5.8 5.6" fill="none" stroke="#3a3a3a" stroke-width="0.85"/></svg></div>
<div class="t" style="left:553px;top:500px;">1</div>
<div class="t" style="left:598px;top:500px;">Female</div>
<div class="m" style="left:648px;top:500px;font-size:11.7px;transform:none">C9596767,32E2290B,D9D17C36,8FF3EE25</div>
<div style="position:absolute;left:31px;top:520px;width:873px;height:20px;background:#90ee90"></div>
<div style="position:absolute;left:31px;top:519px;width:873px;height:1px;background:#a0a0a0"></div>
<div style="position:absolute;left:15px;top:540px;width:15px;height:1px;background:#e3e3e3"></div>
<div class="t" style="left:34.5px;top:521px;">142</div>
<div class="t" style="left:74px;top:521px;">4482</div>
<div class="t" style="right:929px;top:521px;transform-origin:100% 50%">Accept</div>
<div class="t" style="left:184px;top:521px;color:#0000ff;">31</div>
<div class="t" style="left:214px;top:521px;color:#0000ff;">31</div>
<div class="t" style="left:244px;top:521px;color:#000;">18</div>
<div class="t" style="left:274px;top:521px;color:#ff1493;">31</div>
<div class="t" style="left:304px;top:521px;color:#0000ff;">31</div>
<div class="t" style="left:334px;top:521px;color:#0000ff;">31</div>
<div class="t" style="left:364px;top:521px;">Female</div>
<div class="t" style="left:419px;top:521px;">Dragon</div>
<div class="t" style="left:468px;top:521px;">1817</div>
<div style="position:absolute;left:508px;top:525px;width:12px;height:12px"><svg width="12" height="12" viewBox="0 0 12 12"><circle cx="4.1" cy="6.9" r="2.5" fill="none" stroke="#262626" stroke-width="0.9"/><circle cx="4.1" cy="6.9" r="1" fill="#000"/><path d="M5.9 4.9 L8.6 2.2 M6.6 1.9 H8.9 V4.2" fill="none" stroke="#3a3a3a" stroke-width="0.85"/></svg></div>
<div class="t" style="left:553px;top:521px;">2</div>
<div class="t" style="left:598px;top:521px;">Female</div>
<div class="m" style="left:648px;top:521px;font-size:11.7px;transform:none">413FFDD7,304DC3D8,5657BD1E,A232D01B</div>
<div style="position:absolute;left:31px;top:541px;width:873px;height:20px;background:#90ee90"></div>
<div style="position:absolute;left:31px;top:540px;width:873px;height:1px;background:#a0a0a0"></div>
<div style="position:absolute;left:15px;top:561px;width:15px;height:1px;background:#e3e3e3"></div>
<div class="t" style="left:34.5px;top:542px;">143</div>
<div class="t" style="left:74px;top:542px;">4513</div>
<div class="t" style="right:929px;top:542px;transform-origin:100% 50%">Accept</div>
<div class="t" style="left:184px;top:542px;color:#ff1493;">31</div>
<div class="t" style="left:214px;top:542px;color:#0000ff;">31</div>
<div class="t" style="left:244px;top:542px;color:#ff1493;">31</div>
<div class="t" style="left:274px;top:542px;color:#ff1493;">31</div>
<div class="t" style="left:304px;top:542px;color:#0000ff;">31</div>
<div class="t" style="left:334px;top:542px;color:#000;">5</div>
<div class="t" style="left:364px;top:542px;">Female</div>
<div class="t" style="left:419px;top:542px;">Dark</div>
<div class="t" style="left:468px;top:542px;">3668</div>
<div style="position:absolute;left:508px;top:546px;width:12px;height:12px"><svg width="12" height="12" viewBox="0 0 12 12"><circle cx="4.1" cy="6.9" r="2.5" fill="none" stroke="#262626" stroke-width="0.9"/><circle cx="4.1" cy="6.9" r="1" fill="#000"/><path d="M5.9 4.9 L8.6 2.2 M6.6 1.9 H8.9 V4.2" fill="none" stroke="#3a3a3a" stroke-width="0.85"/></svg></div>
<div class="t" style="left:553px;top:542px;">1</div>
<div class="t" style="left:598px;top:542px;">Female</div>
<div class="m" style="left:648px;top:542px;font-size:11.7px;transform:none">A691BFAA,1109AED2,EDF988DD,B46BDB1E</div>
<div style="position:absolute;left:31px;top:562px;width:873px;height:20px;background:#f08080"></div>
<div style="position:absolute;left:31px;top:561px;width:873px;height:1px;background:#a0a0a0"></div>
<div style="position:absolute;left:15px;top:582px;width:15px;height:1px;background:#e3e3e3"></div>
<div class="t" style="left:34.5px;top:563px;">144</div>
<div class="t" style="left:74px;top:563px;">4545</div>
<div class="t" style="right:929px;top:563px;transform-origin:100% 50%">Reject</div>
<div class="t" style="left:184px;top:563px;color:#ff1493;">31</div>
<div class="t" style="left:214px;top:563px;color:#000;">27</div>
<div class="t" style="left:244px;top:563px;color:#0000ff;">30</div>
<div class="t" style="left:274px;top:563px;color:#ff1493;">31</div>
<div class="t" style="left:304px;top:563px;color:#0000ff;">31</div>
<div class="t" style="left:334px;top:563px;color:#0000ff;">31</div>
<div class="t" style="left:364px;top:563px;">Female</div>
<div class="t" style="left:419px;top:563px;">Dragon</div>
<div class="t" style="left:468px;top:563px;">0814</div>
<div style="position:absolute;left:508px;top:567px;width:12px;height:12px"><svg width="12" height="12" viewBox="0 0 12 12"><circle cx="4.1" cy="6.9" r="2.5" fill="none" stroke="#262626" stroke-width="0.9"/><circle cx="4.1" cy="6.9" r="1" fill="#000"/><path d="M5.9 4.9 L8.6 2.2 M6.6 1.9 H8.9 V4.2" fill="none" stroke="#3a3a3a" stroke-width="0.85"/></svg></div>
<div class="t" style="left:553px;top:563px;">1</div>
<div class="t" style="left:598px;top:563px;">Female</div>
<div class="m" style="left:648px;top:563px;font-size:11.7px;transform:none">23304E12,4A31B27A,E2C1BD01,74FCDC57</div>
<div style="position:absolute;left:31px;top:583px;width:873px;height:20px;background:#90ee90"></div>
<div style="position:absolute;left:31px;top:582px;width:873px;height:1px;background:#a0a0a0"></div>
<div style="position:absolute;left:15px;top:603px;width:15px;height:1px;background:#e3e3e3"></div>
<div class="t" style="left:34.5px;top:584px;">145</div>
<div class="t" style="left:74px;top:584px;">4546</div>
<div class="t" style="right:929px;top:584px;transform-origin:100% 50%">Accept</div>
<div class="t" style="left:184px;top:584px;color:#ff1493;">31</div>
<div class="t" style="left:214px;top:584px;color:#000;">2</div>
<div class="t" style="left:244px;top:584px;color:#ff1493;">31</div>
<div class="t" style="left:274px;top:584px;color:#ff1493;">31</div>
<div class="t" style="left:304px;top:584px;color:#ff1493;">31</div>
<div class="t" style="left:334px;top:584px;color:#0000ff;">31</div>
<div class="t" style="left:364px;top:584px;">Female</div>
<div class="t" style="left:419px;top:584px;">Dragon</div>
<div class="t" style="left:468px;top:584px;">1404</div>
<div style="position:absolute;left:508px;top:588px;width:12px;height:12px"><svg width="12" height="12" viewBox="0 0 12 12"><circle cx="4.1" cy="6.9" r="2.5" fill="none" stroke="#262626" stroke-width="0.9"/><circle cx="4.1" cy="6.9" r="1" fill="#000"/><path d="M5.9 4.9 L8.6 2.2 M6.6 1.9 H8.9 V4.2" fill="none" stroke="#3a3a3a" stroke-width="0.85"/></svg></div>
<div class="t" style="left:553px;top:584px;">2</div>
<div class="t" style="left:598px;top:584px;">Female</div>
<div class="m" style="left:648px;top:584px;font-size:11.7px;transform:none">56BD1C6F,6C1C366B,C541A394,E2C1BD01</div>
<div style="position:absolute;left:31px;top:604px;width:873px;height:20px;background:#90ee90"></div>
<div style="position:absolute;left:31px;top:603px;width:873px;height:1px;background:#a0a0a0"></div>
<div style="position:absolute;left:15px;top:624px;width:15px;height:1px;background:#e3e3e3"></div>
<div class="t" style="left:34.5px;top:605px;">146</div>
<div class="t" style="left:74px;top:605px;">4576</div>
<div class="t" style="right:929px;top:605px;transform-origin:100% 50%">Accept</div>
<div class="t" style="left:184px;top:605px;color:#0000ff;">31</div>
<div class="t" style="left:214px;top:605px;color:#000;">7</div>
<div class="t" style="left:244px;top:605px;color:#ff1493;">31</div>
<div class="t" style="left:274px;top:605px;color:#ff1493;">31</div>
<div class="t" style="left:304px;top:605px;color:#ff1493;">31</div>
<div class="t" style="left:334px;top:605px;color:#ff1493;">31</div>
<div class="t" style="left:364px;top:605px;">Female</div>
<div class="t" style="left:419px;top:605px;">Dark</div>
<div class="t" style="left:468px;top:605px;">2374</div>
<div style="position:absolute;left:508px;top:609.5px;width:12px;height:12px"><svg width="12" height="12" viewBox="0 0 12 12"><circle cx="4.1" cy="3.6" r="2.6" fill="none" stroke="#262626" stroke-width="0.9"/><circle cx="4.1" cy="3.6" r="1" fill="#000"/><path d="M2.4 5.6 Q2.9 10.8 4.1 10.8 Q5.4 10.8 5.8 5.6" fill="none" stroke="#3a3a3a" stroke-width="0.85"/></svg></div>
<div class="t" style="left:553px;top:605px;">1</div>
<div class="t" style="left:598px;top:605px;">Female</div>
<div class="m" style="left:648px;top:605px;font-size:11.7px;transform:none">B1AC3F0B,7DCDFA66,2CEB3FAA,CE1ED7C4</div>
<div style="position:absolute;left:31px;top:624px;width:873px;height:1px;background:#a0a0a0"></div>
<div style="position:absolute;left:70px;top:393px;width:1px;height:232px;background:#a0a0a0"></div>
<div style="position:absolute;left:130px;top:393px;width:1px;height:232px;background:#a0a0a0"></div>
<div style="position:absolute;left:180px;top:393px;width:1px;height:232px;background:#a0a0a0"></div>
<div style="position:absolute;left:210px;top:393px;width:1px;height:232px;background:#a0a0a0"></div>
<div style="position:absolute;left:240px;top:393px;width:1px;height:232px;background:#a0a0a0"></div>
<div style="position:absolute;left:270px;top:393px;width:1px;height:232px;background:#a0a0a0"></div>
<div style="position:absolute;left:300px;top:393px;width:1px;height:232px;background:#a0a0a0"></div>
<div style="position:absolute;left:330px;top:393px;width:1px;height:232px;background:#a0a0a0"></div>
<div style="position:absolute;left:360px;top:393px;width:1px;height:232px;background:#a0a0a0"></div>
<div style="position:absolute;left:415px;top:393px;width:1px;height:232px;background:#a0a0a0"></div>
<div style="position:absolute;left:464px;top:393px;width:1px;height:232px;background:#a0a0a0"></div>
<div style="position:absolute;left:504px;top:393px;width:1px;height:232px;background:#a0a0a0"></div>
<div style="position:absolute;left:549px;top:393px;width:1px;height:232px;background:#a0a0a0"></div>
<div style="position:absolute;left:594px;top:393px;width:1px;height:232px;background:#a0a0a0"></div>
<div style="position:absolute;left:644px;top:393px;width:1px;height:232px;background:#a0a0a0"></div>
<div style="position:absolute;left:904px;top:393px;width:1px;height:232px;background:#a0a0a0"></div>
<div style="position:absolute;left:30px;top:393px;width:1px;height:232px;background:#a0a0a0"></div>
<div style="position:absolute;left:13px;top:393px;width:17px;height:1px;background:#a0a0a0"></div>
<div class="t" style="left:38px;top:372.5px;">Egg#</div>
<div class="t" style="left:78px;top:372.5px;">Frame</div>
<div class="t" style="left:138px;top:372.5px;">Adv.</div>
<div class="t" style="left:188.5px;top:372.5px;">HP</div>
<div class="t" style="left:217px;top:372.5px;">Atk</div>
<div class="t" style="left:247.5px;top:372.5px;">Def</div>
<div class="t" style="left:278px;top:372.5px;">SpA</div>
<div class="t" style="left:307.5px;top:372.5px;">SpD</div>
<div class="t" style="left:338px;top:372.5px;">Spe</div>
<div class="t" style="left:368px;top:372.5px;">Nature</div>
<div class="t" style="left:423px;top:372.5px;">HPType</div>
<div class="t" style="left:472px;top:372.5px;">PSV</div>
<div class="t" style="left:511px;top:372.5px;">Gender</div>
<div class="t" style="left:557px;top:372.5px;">Ability</div>
<div class="t" style="left:602px;top:372.5px;">Ball</div>
<div class="t" style="left:652px;top:372.5px;">Egg Seed</div>
<div style="position:absolute;left:1075px;top:371px;width:17px;height:262px;background:#f0f0f0"></div>
<svg style="position:absolute;left:1080px;top:377px" width="7" height="6" viewBox="0 0 7 6"><path d="M0.7 5.3 L3.5 2.2 L6.3 5.3" fill="none" stroke="#606060" stroke-width="2.1"/></svg>
<svg style="position:absolute;left:1080px;top:622px" width="7" height="6" viewBox="0 0 7 6"><path d="M0.7 0.7 L3.5 3.8 L6.3 0.7" fill="none" stroke="#606060" stroke-width="2.1"/></svg>
<div style="position:absolute;left:1076px;top:598px;width:15px;height:18px;background:#cdcdcd"></div>
</body></html>
